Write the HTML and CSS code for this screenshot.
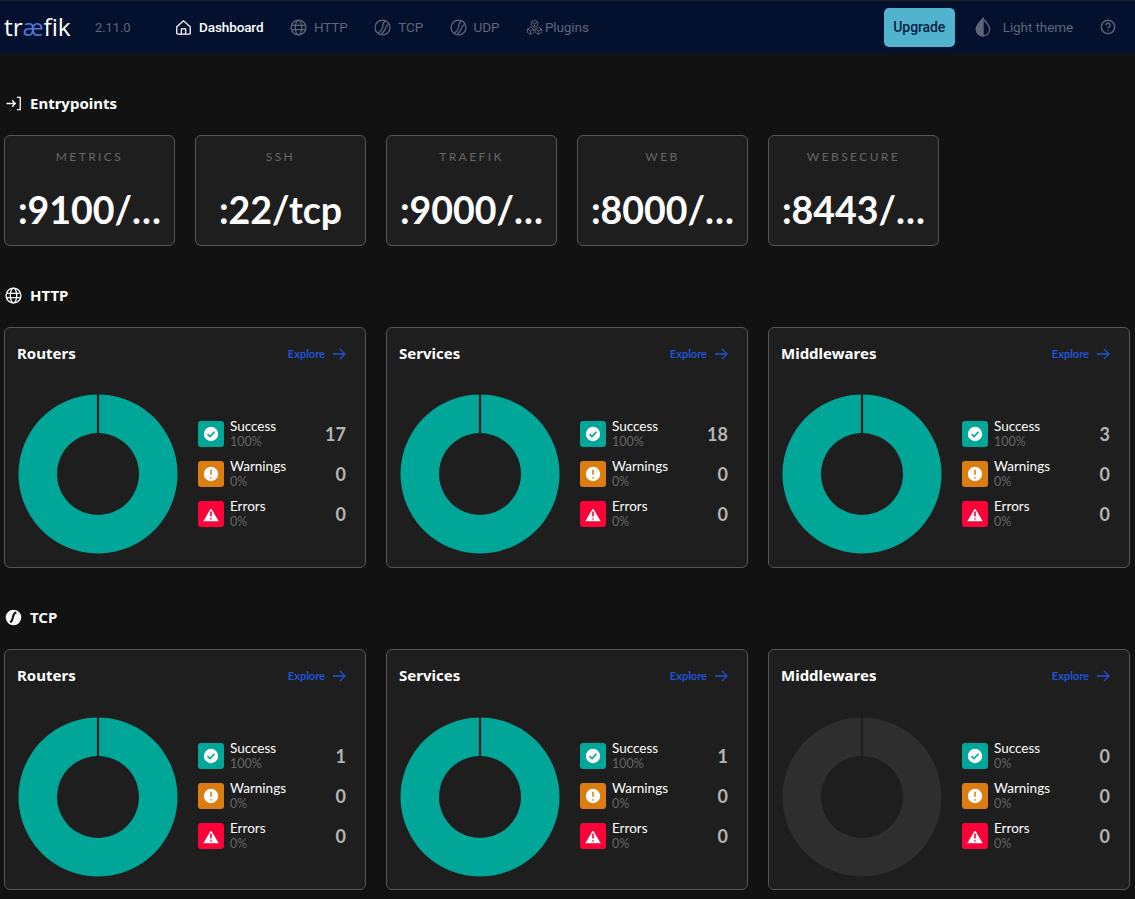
FILE: index.html
```html
<!DOCTYPE html>
<html lang="en">
<head>
    <meta charset="UTF-8">
    <title>Traefik</title>
    <link rel="stylesheet" href="styles.css">
</head>
<body>
    <svg class="defs" width="0" height="0">
        <defs>
            <symbol id="i-globe" viewBox="0 0 24 24"><circle cx="12" cy="12" r="10.500"/><ellipse cx="12" cy="12" rx="4.500" ry="10.500"/><path d="M2 9h20M2 15h20"/></symbol>
            <symbol id="i-swoosh" viewBox="0 0 24 24"><circle cx="12" cy="12" r="10.500"/><path d="M16 3C11 5.500 13.500 10 11 14.500 9.800 16.700 8 19 6 20.500M20.500 8C17 8.500 17 12 15.500 15c-1 2-3 4.500-5 6"/></symbol>
            <symbol id="i-check" viewBox="0 0 18 18"><circle class="fill" cx="9" cy="9" r="8"/><path class="mark" d="M5.500 9.200 8 11.600l4.500-4.800"/></symbol>
            <symbol id="i-warn" viewBox="0 0 18 18"><circle class="fill" cx="9" cy="9" r="8"/><path class="mark" d="M9 4.800v5M9 12.300v1.200"/></symbol>
            <symbol id="i-error" viewBox="0 0 18 18"><path class="fill" d="M9 1.500 17.500 16a.6.6 0 0 1-.5 1H1a.6.6 0 0 1-.5-1z"/><path class="mark" d="M9 6.500v5M9 13.300v1.200"/></symbol>
            <symbol id="i-arrow" viewBox="0 0 16 14"><path d="M1 7h13.500M9 1l6 6-6 6"/></symbol>
            <symbol id="donut-full" viewBox="0 0 160 160"><path d="M78.900 .5A79.500 79.500 0 1 0 81.100 .5V39A41 41 0 1 1 78.900 39z"/></symbol>
        </defs>
    </svg>

    <header class="topbar">
        <div class="logo">tr<span class="logo-ae">æ</span>fik</div>
        <div class="version">2.11.0</div>
        <nav class="nav">
            <a class="nav-item active">
                <svg class="nav-icon" viewBox="0 0 24 24"><path d="M2.500 11 12 2.500l9.500 8.500v9a1.500 1.500 0 0 1-1.500 1.500H4A1.500 1.500 0 0 1 2.500 20z"/><path d="M9 21.500V14h6v7.500"/></svg>
                Dashboard
            </a>
            <a class="nav-item"><svg class="nav-icon"><use href="#i-globe"/></svg>HTTP</a>
            <a class="nav-item"><svg class="nav-icon"><use href="#i-swoosh"/></svg>TCP</a>
            <a class="nav-item"><svg class="nav-icon"><use href="#i-swoosh"/></svg>UDP</a>
            <a class="nav-item plugins">
                <svg class="nav-icon thin" viewBox="0 0 24 24"><path d="M12 1.500l4.500 2.600v5L12 11.700 7.500 9.100v-5zM7.500 4.100 12 6.700l4.500-2.600M12 6.700v5M6.500 11.500l4.500 2.600v5l-4.500 2.600L2 19.100v-5zM2 14.100l4.500 2.600 4.500-2.600M6.500 16.700v5M17.500 11.500l4.500 2.600v5l-4.500 2.600-4.500-2.600v-5zM13 14.100l4.500 2.600 4.500-2.600M17.500 16.700v5"/></svg>
                Plugins
            </a>
        </nav>
        <div class="topbar-right">
            <a class="upgrade">Upgrade</a>
            <a class="theme">
                <svg class="theme-icon" viewBox="0 0 18 22"><path d="M9 1.500C12 5.500 16.500 9 16.500 13.500a7.500 7.500 0 0 1-15 0C1.500 9 6 5.500 9 1.500z"/><path class="half" d="M9 1.500v19.500a7.500 7.500 0 0 1-7.500-7.500C1.500 9 6 5.500 9 1.500z"/></svg>
                Light theme
            </a>
            <svg class="help" viewBox="0 0 18 18"><circle cx="9" cy="9" r="7.500"/><path d="M6.700 7a2.300 2.300 0 1 1 3.600 1.900c-.8.500-1.300 1-1.300 1.900M9 12.600v1"/></svg>
        </div>
    </header>

    <main class="page">
        <h2 class="section-title">
            <svg class="section-icon" viewBox="0 0 24 24"><path d="M2 12h12M10 7.500l4.500 4.500-4.500 4.500M17 3.500h4.500v17H17"/></svg>
            Entrypoints
        </h2>
        <div class="entry-grid">
            <div class="entry"><div class="entry-name">METRICS</div><div class="entry-value">:9100/…</div></div>
            <div class="entry"><div class="entry-name">SSH</div><div class="entry-value">:22/tcp</div></div>
            <div class="entry"><div class="entry-name">TRAEFIK</div><div class="entry-value">:9000/…</div></div>
            <div class="entry"><div class="entry-name">WEB</div><div class="entry-value">:8000/…</div></div>
            <div class="entry"><div class="entry-name">WEBSECURE</div><div class="entry-value">:8443/…</div></div>
        </div>

        <h2 class="section-title">
            <svg class="section-icon"><use href="#i-globe"/></svg>
            HTTP
        </h2>
        <div class="card-grid" id="http"></div>

        <h2 class="section-title">
            <svg class="section-icon filled" viewBox="0 0 24 24"><circle cx="12" cy="12" r="11"/><path class="cut" d="M16 4.500c-3.500 1-4.500 4.500-5 8-.4 2.500-1.500 4.500-3.500 6.500"/></svg>
            TCP
        </h2>
        <div class="card-grid" id="tcp"></div>
    </main>

    <script>
        const http = [['Routers', 17], ['Services', 18], ['Middlewares', 3]];
        const tcp = [['Routers', 1], ['Services', 1], ['Middlewares', 0]];

        function row(kind, icon, label, pct, count) {
            return `<div class="legend-row">
                <span class="badge ${kind}"><svg><use href="#${icon}"/></svg></span>
                <span class="legend-text"><span class="legend-label">${label}</span><span class="legend-pct">${pct}%</span></span>
                <span class="legend-count">${count}</span>
            </div>`;
        }

        function card(name, count) {
            return `<section class="card">
                <div class="card-head">
                    <h3 class="card-title">${name}</h3>
                    <a class="explore">Explore<svg><use href="#i-arrow"/></svg></a>
                </div>
                <div class="card-body">
                    <svg class="donut ${count ? '' : 'empty'}"><use href="#donut-full"/></svg>
                    <div class="legend">
                        ${row('ok', 'i-check', 'Success', count ? 100 : 0, count)}
                        ${row('warn', 'i-warn', 'Warnings', 0, 0)}
                        ${row('err', 'i-error', 'Errors', 0, 0)}
                    </div>
                </div>
            </section>`;
        }

        document.getElementById('http').innerHTML = http.map(c => card(c[0], c[1])).join('');
        document.getElementById('tcp').innerHTML = tcp.map(c => card(c[0], c[1])).join('');
    </script>
</body>
</html>
```

FILE: styles.css
```css
:root {
    --bg: #121212;
    --panel: #1e1e1e;
    --line: #565656;
    --bar: #03102e;
    --muted: #5f6675;
    --teal: #00a697;
    --orange: #db7d11;
    --red: #ff0039;
    --blue: #2053d6;
}
* { box-sizing: border-box; }
html, body { overflow: hidden; }
body {
    margin: 0;
    height: 899px;
    background: var(--bg);
    color: #fff;
    font-family: 'Lato', 'Noto Sans', sans-serif;
}
.defs { position: absolute; }

.topbar {
    display: flex;
    align-items: center;
    height: 53px;
    padding: 0 0 0 4px;
    background: var(--bar);
    border-top: 1px solid #222;
    font-family: 'Roboto', sans-serif;
    font-size: 13.500px;
    letter-spacing: -0.1px;
}
.logo {
    width: 68px;
    font-family: 'Open Sans', sans-serif;
    font-size: 24.500px;
    font-weight: 400;
    line-height: 1;
    color: #fff;
}
.logo-ae { color: #4d76d6; }
.version {
    margin-left: 23px;
    width: 80px;
    font-size: 13px;
    color: var(--muted);
}
.nav { display: flex; align-items: center; }
.nav-item {
    display: flex;
    align-items: center;
    gap: 7px;
    margin-right: 26.500px;
    color: var(--muted);
}
.nav-item.active { color: #fff; font-weight: 500; }
.nav-item.plugins { gap: 2px; }
.nav-icon {
    width: 17px;
    height: 17px;
    fill: none;
    stroke: currentColor;
    stroke-width: 1.800;
}
.nav-icon.thin { stroke-width: 1.300; }
.topbar-right {
    display: flex;
    align-items: center;
    margin-left: auto;
    padding-right: 19px;
}
.upgrade {
    display: flex;
    align-items: center;
    justify-content: center;
    width: 71px;
    height: 39px;
    margin-right: 20px;
    border-radius: 5px;
    background: #52b3cf;
    color: #03233f;
    font-size: 14px;
    font-weight: 500;
}
.theme {
    display: flex;
    align-items: center;
    gap: 12px;
    margin-right: 27px;
    color: var(--muted);
}
.theme-icon { width: 16px; height: 20px; fill: none; stroke: var(--muted); stroke-width: 1.500; }
.theme-icon .half { fill: var(--muted); }
.help { width: 16px; height: 16px; fill: none; stroke: var(--muted); stroke-width: 1.600; }

.page { padding: 38px 5px 0 4px; }
.section-title {
    display: flex;
    align-items: center;
    gap: 8px;
    height: 24px;
    margin: 0 0 20px;
    padding-left: 1px;
    font-family: 'Noto Sans', sans-serif;
    font-size: 15px;
    font-weight: 700;
}
.section-icon {
    width: 17px;
    height: 17px;
    fill: none;
    stroke: #fff;
    stroke-width: 1.800;
}
.section-icon.filled { fill: #fff; stroke: none; }
.section-icon .cut { fill: none; stroke: #121212; stroke-width: 3; }

.entry-grid {
    display: grid;
    grid-template-columns: repeat(6, minmax(0, 1fr));
    gap: 20px;
    margin-bottom: 37px;
}
.entry {
    height: 111px;
    padding: 14px 12px 0;
    background: var(--panel);
    border: 1px solid var(--line);
    border-radius: 6px;
    text-align: center;
}
.entry-name {
    font-size: 12px;
    line-height: 14px;
    letter-spacing: 2.400px;
    color: #666;
}
.entry-value {
    margin-top: 24px;
    white-space: nowrap;
    font-size: 37.500px;
    line-height: 44px;
    font-weight: 700;
}

.card-grid {
    display: grid;
    grid-template-columns: repeat(3, minmax(0, 1fr));
    gap: 20px;
    margin-bottom: 37px;
}
.card {
    height: 241px;
    padding: 11px 19px 13px 12px;
    background: var(--panel);
    border: 1px solid var(--line);
    border-radius: 6px;
}
.card-head {
    display: flex;
    align-items: center;
    justify-content: space-between;
    height: 28px;
}
.card-title {
    margin: 0;
    font-family: 'Noto Sans', sans-serif;
    font-size: 15px;
    font-weight: 700;
}
.explore {
    display: flex;
    align-items: center;
    gap: 7px;
    font-size: 11px;
    font-weight: 700;
    color: var(--blue);
}
.explore svg {
    width: 14px;
    height: 12px;
    margin-top: 1px;
    fill: none;
    stroke: var(--blue);
    stroke-width: 1.500;
}
.card-body {
    display: flex;
    align-items: center;
    gap: 20px;
    margin-top: 27px;
}
.donut {
    flex: none;
    width: 160px;
    height: 160px;
    margin-left: 1px;
    fill: var(--teal);
}
#tcp .donut { margin-top: 1px; margin-bottom: -1px; }
.donut.empty { fill: #2e2e2e; }
.legend {
    flex: 1;
    display: flex;
    flex-direction: column;
    gap: 14px;
}
.legend-row {
    display: flex;
    align-items: center;
    height: 26px;
}
.badge {
    display: flex;
    align-items: center;
    justify-content: center;
    flex: none;
    width: 26px;
    height: 26px;
    margin-right: 6px;
    border-radius: 3px;
}
.badge.ok { background: var(--teal); --mark: var(--teal); }
.badge.warn { background: var(--orange); --mark: var(--orange); }
.badge.err { background: var(--red); --mark: var(--red); }
.badge svg {
    width: 18px;
    height: 18px;
    fill: #fff;
    stroke: var(--mark);
    stroke-width: 1.600;
}
.legend-text {
    flex: 1;
    display: flex;
    flex-direction: column;
}
.legend-label {
    font-size: 13.500px;
    line-height: 15px;
}
.legend-pct {
    font-size: 12.500px;
    line-height: 15px;
    color: #666;
}
.legend-count {
    font-size: 18px;
    font-weight: 700;
    color: #b5b5b5;
}
```
